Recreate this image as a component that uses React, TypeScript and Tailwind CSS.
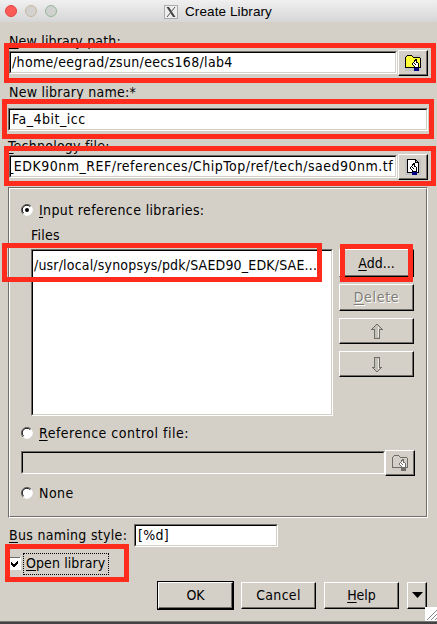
import type { ReactNode } from "react";

const text =
  "block h-4 shrink-0 whitespace-pre text-[14px] leading-[16px] text-black";
const raised =
  "border border-t-white border-l-white border-r-black border-b-black bg-[#d4d0c8] shadow-[inset_-1px_-1px_0_#6f6d68]";

function M({ children }: { children: ReactNode }) {
  return (
    <span className="underline decoration-1 underline-offset-[2px] [text-decoration-skip-ink:none]">
      {children}
    </span>
  );
}

function Field({ className, children, disabled }: { className: string; children?: ReactNode; disabled?: boolean }) {
  return (
    <div className={`h-[23px] border border-t-[#6f6d68] border-l-[#6f6d68] border-r-white border-b-white ${className}`}>
      <div
        className={`flex h-full overflow-hidden border border-t-black border-l-black border-r-[#d4d0c8] border-b-[#d4d0c8] pt-[1px] ${
          disabled ? "bg-[#d4d0c8]" : "bg-white"
        }`}
      >
        {children}
      </div>
    </div>
  );
}

function Browse({ kind }: { kind: "folder" | "file" | "off" }) {
  const off = kind === "off";
  const ink = off ? "#6f6d68" : "#000";
  return (
    <button className="flex h-[26px] w-[30px] items-start border border-t-white border-l-white border-r-black border-b-black bg-[#d4d0c8] pl-[6px] pt-[4px] shadow-[inset_-1px_-1px_0_#6f6d68]">
      <svg width="16" height="16" viewBox="0 0 16 16" shapeRendering="crispEdges">
        <rect width="16" height="16" fill={off ? "#d0cdc6" : "#c4c3c1"} />
        {kind === "file" ? (
          <path d="M2.500 .5H10.500L13.500 3.500V13.500H2.500ZM10.500 .5V3.500H13.500" fill="#fff" stroke={ink} />
        ) : (
          <path d="M.5 2.500L2.500 .5H6.500L8.500 2.500H14.500L15.500 3.500V12.500H.5Z" fill={off ? "#d4d0c8" : "#ffff35"} stroke={ink} />
        )}
        <g transform={kind === "file" ? "translate(-2 0)" : undefined}>
          <path d="M10.500 4.500H11.500V6.500L13.500 8.500V12.500H9.500V11.500L7.500 9.500V8.500L9.500 6.500Z" fill="#fff" stroke={ink} />
          <path d="M9 8h1v1H9zM11 7h1v1h-1zM10 9h1v1h-1z" fill={ink} />
          <rect x="9" y="13" width="5" height="3" fill={off ? "#6f6d68" : "#000080"} />
        </g>
      </svg>
    </button>
  );
}

function Radio({ on }: { on?: boolean }) {
  return (
    <svg width="12" height="12" viewBox="0 0 12 12" className="mr-[6px] shrink-0">
      <circle cx="6" cy="6" r="5.300" fill="#fff" stroke="#fff" />
      <path d="M2 10A5.400 5.400 0 0 1 10 2" fill="none" stroke="#6f6d68" />
      <path d="M2.600 9.200A4.600 4.600 0 0 1 9.200 2.600" fill="none" stroke="#000" />
      {on && <circle cx="6" cy="6" r="2" fill="#000" />}
    </svg>
  );
}

function Arrow({ down }: { down?: boolean }) {
  return (
    <button className={`flex h-[26px] w-[75px] items-center justify-center ${raised}`}>
      <svg width="12" height="16" viewBox="0 0 12 16" className={down ? "-scale-y-100 translate-y-[1px]" : ""} shapeRendering="crispEdges">
        <path d="M6 1L11 6H8.500V15.500H3.500V6H1Z" fill="#c4c1b9" stroke="#6f6d68" />
        <path d="M7 4V14" stroke="#eeece7" />
      </svg>
    </button>
  );
}

function Mark({ className }: { className: string }) {
  return <div className={`pointer-events-none absolute border-[5px] border-[#ff2b1d] ${className}`} />;
}

export default function App() {
  return (
    <div className="relative flex h-[624px] w-[437px] flex-col overflow-hidden bg-[#d4d0c8] font-['DejaVu_Sans_Condensed','DejaVu_Sans',sans-serif]">
      <header className="flex h-[22px] shrink-0 items-center bg-linear-to-b from-[#f0f0f0] to-[#d6d6d6] pl-[5px]">
        <span className="size-3 rounded-full border border-[#df4744] bg-[#fc5b57]" />
        <span className="ml-2 size-3 rounded-full border border-[#c9b79f] bg-[#d3d2d0]" />
        <span className="ml-2 size-3 rounded-full border border-[#94b798] bg-[#d0d2d0]" />
        <svg width="14" height="14" viewBox="0 0 14 14" className="ml-[107px] mt-[2px]">
          <rect x=".5" y=".5" width="13" height="13" fill="#eee" stroke="#aaa" />
          <path d="M2.500 2H5L11.500 12H9Z" fill="#444" />
          <path d="M11 2L3 12" stroke="#555" />
        </svg>
        <span className="ml-[7px] mt-px whitespace-pre font-['Liberation_Sans',Arial,sans-serif] text-[13.5px] leading-4 tracking-[0.1px]">Create Library</span>
      </header>

      <main className="flex flex-col px-2 pt-[11px]">
        <span className={`${text} ml-px tracking-[0.18px]`}><M>N</M>ew library path:</span>
        <div className="mt-px flex">
          <Field className="ml-px mt-px w-[388px]"><span className={`${text} ml-px tracking-[0.33px]`}>/home/eegrad/zsun/eecs168/lab4</span></Field>
          <div className="ml-px"><Browse kind="folder" /></div>
        </div>
        <span className={`${text} ml-px mt-2 tracking-[0.27px]`}>New library name:*</span>
        <Field className="mt-2 w-[420px]"><span className={`${text} ml-[2px] tracking-[0.5px]`}>Fa_4bit_icc</span></Field>
        <span className={`${text} mt-[7px] tracking-[0.25px]`}><M>T</M>echnology file:</span>
        <div className="flex">
          <Field className="ml-px mt-px w-[388px]"><span className={`${text} -ml-[4px] tracking-[0.5px]`}>_EDK90nm_REF/references/ChipTop/ref/tech/saed90nm.tf</span></Field>
          <div className="ml-px"><Browse kind="file" /></div>
        </div>

        <section className="mt-[7px] h-[331px] w-[420px] border border-t-[#6f6d68] border-l-[#6f6d68] border-r-white border-b-white">
          <div className="flex h-full flex-col border border-t-white border-l-white border-r-[#6f6d68] border-b-[#6f6d68] pl-[11px] pt-3">
            <div className="flex h-4 items-center pt-px"><Radio on /><span className={`${text} tracking-[0.37px]`}><M>I</M>nput reference libraries:</span></div>
            <span className={`${text} ml-[10px] mt-[10px] tracking-[0.25px]`}>Files</span>
            <div className="mt-[6px] flex">
              <div className="ml-[10px] h-[167px] w-[302px] border border-t-[#6f6d68] border-l-[#6f6d68] border-r-white border-b-white">
                <div className="h-full border border-t-black border-l-black border-r-[#d4d0c8] border-b-[#d4d0c8] bg-white pl-px pt-[6px]">
                  <span className={`${text} tracking-[0.18px]`}>/usr/local/synopsys/pdk/SAED90_EDK/SAE...</span>
                </div>
              </div>
              <div className="ml-[6px] flex flex-col">
                <button className={`flex h-7 w-[75px] justify-center pt-[5px] ${raised}`}><span className={text}><M>A</M>dd...</span></button>
                <button className={`mt-[7px] flex h-[27px] w-[75px] justify-center pt-[4px] ${raised}`}><span className="block h-4 text-[14px] leading-4 tracking-[0.7px] text-[#7e7c77] [text-shadow:1px_1px_0_white]"><M>D</M>elete</span></button>
                <div className="mt-[7px]"><Arrow /></div>
                <div className="mt-[7px]"><Arrow down /></div>
              </div>
            </div>
            <div className="mt-2 flex h-4 items-center pt-px"><Radio /><span className={`${text} tracking-[0.5px]`}><M>R</M>eference control file:</span></div>
            <div className="mt-[10px] flex">
              <Field disabled className="mt-px w-[364px]" />
              <Browse kind="off" />
            </div>
            <div className="mt-2 flex h-4 items-center pt-px"><Radio /><span className={`${text} tracking-[0.5px]`}>None</span></div>
          </div>
        </section>

        <div className="mt-[6px] flex">
          <span className={`${text} ml-px mt-[3px] w-[125px] tracking-[0.3px]`}><M>B</M>us naming style:</span>
          <Field className="w-[144px]"><span className={`${text} ml-[2px] tracking-[0.3px]`}>[%d]</span></Field>
        </div>
        <div className="mt-[6px] flex">
          <svg width="13" height="13" viewBox="0 0 13 13" className="mt-1" shapeRendering="crispEdges">
            <path d="M0 0H13V13H0Z" fill="#fff" />
            <path d="M.5 12V.5H12" fill="none" stroke="#6f6d68" />
            <path d="M3 5v3l2 2h1l4-4V3L5.500 7.500z" fill="#000" />
          </svg>
          <div className="ml-[2px] h-[22px] w-[86px] border border-dotted border-black pl-[2px] pt-px"><span className={`${text} tracking-[0.1px]`}><M>O</M>pen library</span></div>
        </div>
        <div className="mt-[6px] flex pl-[149px]">
          <div className="h-[29px] w-[77px] border border-black"><button className={`flex h-[27px] w-[75px] justify-center pt-[4px] ${raised}`}><span className={text}>OK</span></button></div>
          <button className={`ml-[7px] mt-px flex h-[27px] w-[75px] justify-center pt-[4px] ${raised}`}><span className={`${text} tracking-[0.3px]`}>Cancel</span></button>
          <button className={`ml-2 mt-px flex h-[27px] w-[75px] justify-center pt-[4px] ${raised}`}><span className={text}><M>H</M>elp</span></button>
          <button className={`ml-2 mt-px flex h-[27px] w-5 justify-center pt-[9px] ${raised}`}>
            <svg width="11" height="6" viewBox="0 0 11 6"><path d="M0 0H11L5.500 6Z" /></svg>
          </button>
        </div>
      </main>

      <div className="absolute bottom-0 left-0 h-[3px] w-full border-t border-[#777] bg-[#444]" />
      <svg className="absolute left-[425px] top-[607px]" width="12" height="14" viewBox="0 0 12 14">
        <rect width="12" height="14" fill="#fff" />
        <path d="M2 13L12 3M6 13L12 7M10 13L12 11" stroke="#888" />
      </svg>
      <Mark className="left-1 top-[43px] h-10 w-[432px]" />
      <Mark className="left-[2px] top-[99px] h-10 w-[432px]" />
      <Mark className="left-1 top-[146px] h-10 w-[432px]" />
      <Mark className="left-[2px] top-[243px] h-[39px] w-[320px]" />
      <Mark className="left-[340px] top-[244px] h-[38px] w-[73px]" />
      <Mark className="left-[5px] top-[544px] h-[38px] w-[124px]" />
    </div>
  );
}
